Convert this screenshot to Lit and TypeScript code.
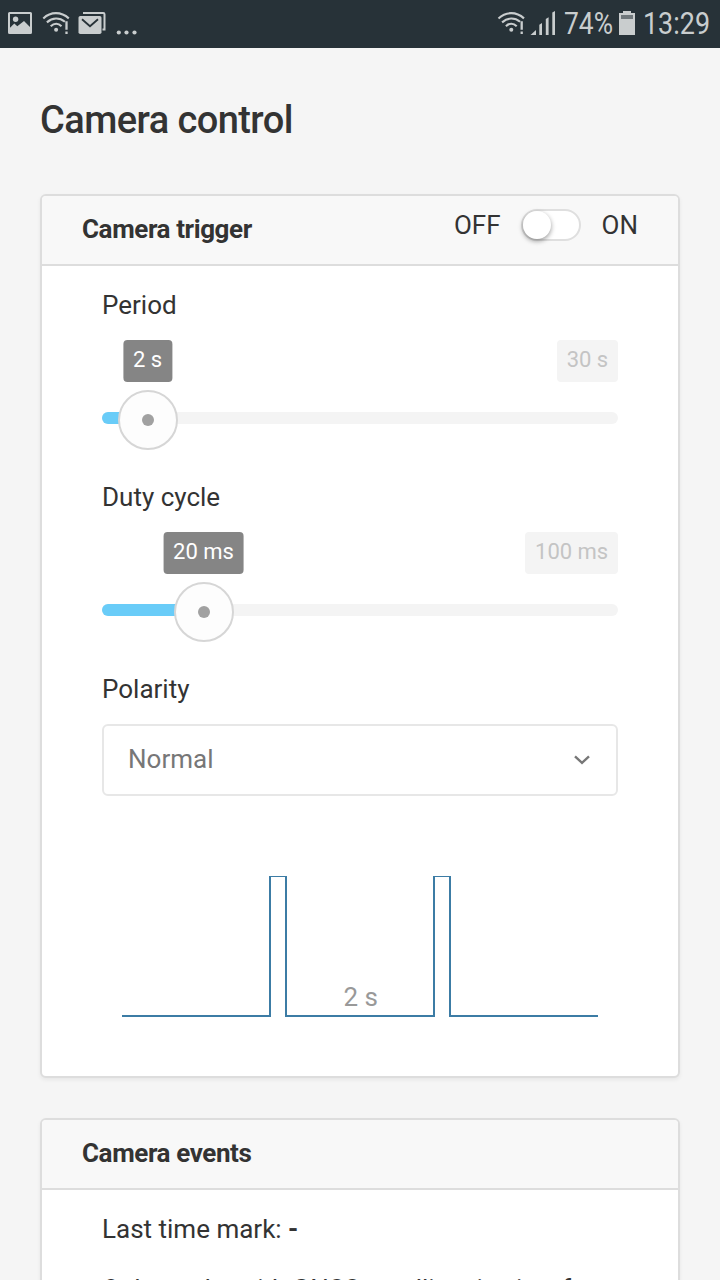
import { LitElement, html, css, svg } from "lit";
import { customElement, property } from "lit/decorators.js";

@customElement("status-bar")
class StatusBar extends LitElement {
  static styles = css`
    :host { display: block; height: 48px; background: #273238; }
    svg { display: block; }
    text { font-family: Roboto, sans-serif; font-size: 30.5px; fill: #c9cdce; }
  `;

  wifi(x: number) {
    return svg`<g transform="translate(${x} 0)" fill="none" stroke="#c9cdce" stroke-width="2.1">
      <path d="M1 18.4C8.5 11.4 18.8 11.4 26.5 18.4" />
      <path d="M4.6 22.4C10.2 17.4 17.2 17.4 22.6 21.8" />
      <path d="M8.4 26.2C11.8 23 16 23 19.2 26.2" />
      <circle cx="13.8" cy="29.8" r="2" fill="#c9cdce" stroke="none" />
      <path d="M24.2 21.2V29.8M24.2 31.4V34" stroke-width="2.3" />
    </g>`;
  }

  render() {
    return html`<svg width="720" height="48" viewBox="0 0 720 48">
      <path fill="#c9cdce" fill-rule="evenodd" d="M9.5 12H30.500Q32 12 32 13.500V32.500Q32 34 30.500 34H9.500Q8 34 8 32.500V13.500Q8 12 9.500 12ZM10 14V27.800L14.300 23.500L17.300 26.200L24 21L30 27V14Z" />
      <circle cx="15.600" cy="19.300" r="2.700" fill="#c9cdce" />
      ${this.wifi(42.3)}
      <rect x="78.500" y="16" width="23" height="18" rx="1.800" fill="#c9cdce" />
      <path d="M82 19.200L90 26.200L98 19.200" fill="none" stroke="#273238" stroke-width="1.800" />
      <path d="M83 13H103.200Q104.500 13 104.500 14.300V29.500H102.500" fill="none" stroke="#c9cdce" stroke-width="2" />
      <g fill="#c9cdce"><circle cx="118.800" cy="32.500" r="2.100" /><circle cx="126.500" cy="32.500" r="2.100" /><circle cx="134.500" cy="32.500" r="2.100" /></g>
      ${this.wifi(497.5)}
      <g fill="#c9cdce">
        <path d="M530.500 35L536 30V35Z" />
        <path d="M539.300 24.800L542 23V35H539.300Z" />
        <path d="M545.800 19L548.600 17.200V35H545.800Z" />
        <path d="M552.300 12.500L555 11V35H552.300Z" />
      </g>
      <text x="564" y="34" textLength="49" lengthAdjust="spacingAndGlyphs">74%</text>
      <path fill="#c9cdce" d="M623 11H631V13H635V35H619V13H623Z" />
      <rect x="621" y="15" width="12" height="4" fill="#6f777b" />
      <text x="643" y="34" textLength="67" lengthAdjust="spacingAndGlyphs">13:29</text>
    </svg>`;
  }
}

@customElement("panel-card")
class PanelCard extends LitElement {
  @property() heading = "";
  static styles = css`
    :host { display: block; box-sizing: border-box; border: 2px solid #ddd; border-radius: 6px; background: #fff; box-shadow: 0 2px 4px rgba(0, 0, 0, 0.06); overflow: hidden; }
    header { display: flex; justify-content: space-between; box-sizing: border-box; height: 70px; padding: 0 40px; border-bottom: 2px solid #ddd; background: #f8f8f8; }
    h2 { margin: 0; font-size: 26px; line-height: 66px; font-weight: 700; letter-spacing: -0.4px; }
    .body { padding: 0 60px; }
  `;
  render() {
    return html`<header><h2>${this.heading}</h2><slot name="action"></slot></header>
      <div class="body"><slot></slot></div>`;
  }
}

@customElement("value-slider")
class ValueSlider extends LitElement {
  @property() label = "";
  @property() value = "";
  @property() max = "";
  @property({ type: Number }) position = 0;
  static styles = css`
    :host { display: block; height: 192px; }
    .label { height: 74px; line-height: 78px; }
    .scale { position: relative; display: flex; justify-content: flex-end; height: 42px; }
    .tag { box-sizing: border-box; height: 42px; padding: 0 10px; border-radius: 4px; font-size: 22px; line-height: 39px; white-space: nowrap; }
    .max { background: #f4f4f4; color: #c4c4c4; letter-spacing: -0.05px; }
    .value { position: absolute; top: 0; transform: translateX(-50%); background: #858585; color: #fff; }
    .track { position: relative; height: 12px; margin-top: 30px; border-radius: 6px; background: #f4f4f4; }
    .fill { height: 12px; border-radius: 6px; background: #69ccf8; }
    .thumb { position: absolute; top: -22px; box-sizing: border-box; width: 60px; height: 60px; margin-left: -30px; border: 2px solid #d6d6d6; border-radius: 50%; background: #fdfdfd; display: grid; place-items: center; }
    .dot { width: 12px; height: 12px; border-radius: 50%; background: #a1a1a1; }
  `;
  render() {
    return html`<div class="label">${this.label}</div>
      <div class="scale">
        <span class="tag value" style="left:${this.position - 0.5}px">${this.value}</span>
        <span class="tag max">${this.max}</span>
      </div>
      <div class="track">
        <div class="fill" style="width:${this.position}px"></div>
        <div class="thumb" style="left:${this.position}px"><span class="dot"></span></div>
      </div>`;
  }
}

@customElement("app-root")
class AppRoot extends LitElement {
  static styles = css`
    :host { display: block; height: 1280px; overflow: hidden; background: #f5f5f5; color: #333; font-family: Roboto, sans-serif; font-size: 26px; }
    main { padding: 0 40px; }
    h1 { margin: 0; height: 146px; line-height: 144px; font-size: 38px; font-weight: 500; letter-spacing: -0.57px; }
    .trigger { height: 884px; }
    .switch { display: flex; align-items: center; height: 58px; line-height: 58px; }
    .toggle { box-sizing: border-box; width: 60px; height: 32px; margin: 0 21px 0 20px; border: 2px solid #dfdfdf; border-radius: 16px; background: #fff; }
    .knob { width: 28px; height: 28px; border-radius: 50%; background: #fff; box-shadow: 0 2px 5px rgba(0, 0, 0, 0.4); }
    .label { height: 74px; line-height: 78px; }
    .select { display: flex; align-items: center; justify-content: space-between; box-sizing: border-box; height: 72px; padding: 0 25px 2px 24px; border: 2px solid #e7e7e7; border-radius: 6px; color: #777; }
    .chart { display: block; margin: 80px 20px 0; }
    .chart text { font-size: 26px; fill: #999; }
    .events { height: 400px; margin-top: 40px; }
    p { margin: 0; line-height: 39px; white-space: nowrap; }
    .mark { padding: 20px 0 21px; }
    .note { letter-spacing: -0.04px; }
  `;
  render() {
    return html`<status-bar></status-bar>
      <main>
        <h1>Camera control</h1>
        <panel-card class="trigger" heading="Camera trigger">
          <div slot="action" class="switch">
            <span>OFF</span>
            <div class="toggle"><div class="knob"></div></div>
            <span>ON</span>
          </div>
          <value-slider label="Period" value="2 s" max="30 s" position="46"></value-slider>
          <value-slider label="Duty cycle" value="20 ms" max="100 ms" position="102"></value-slider>
          <div class="label">Polarity</div>
          <div class="select">
            <span>Normal</span>
            <svg width="18" height="12" viewBox="0 0 18 12"><path d="M2 3.300L9 9.800L16 3.300" fill="none" stroke="#777" stroke-width="2.400" /></svg>
          </div>
          <svg class="chart" width="476" height="142" viewBox="0 0 476 142">
            <path d="M0 140H148V0H164V140H312V0H328V140H476" fill="none" stroke="#3c7ca5" stroke-width="2" />
            <text x="238.800" y="130" text-anchor="middle">2 s</text>
          </svg>
        </panel-card>
        <panel-card class="events" heading="Camera events">
          <p class="mark">Last time mark: <b>-</b></p>
          <p class="note">Only marks with GNSS satellites in view for</p>
        </panel-card>
      </main>`;
  }
}
